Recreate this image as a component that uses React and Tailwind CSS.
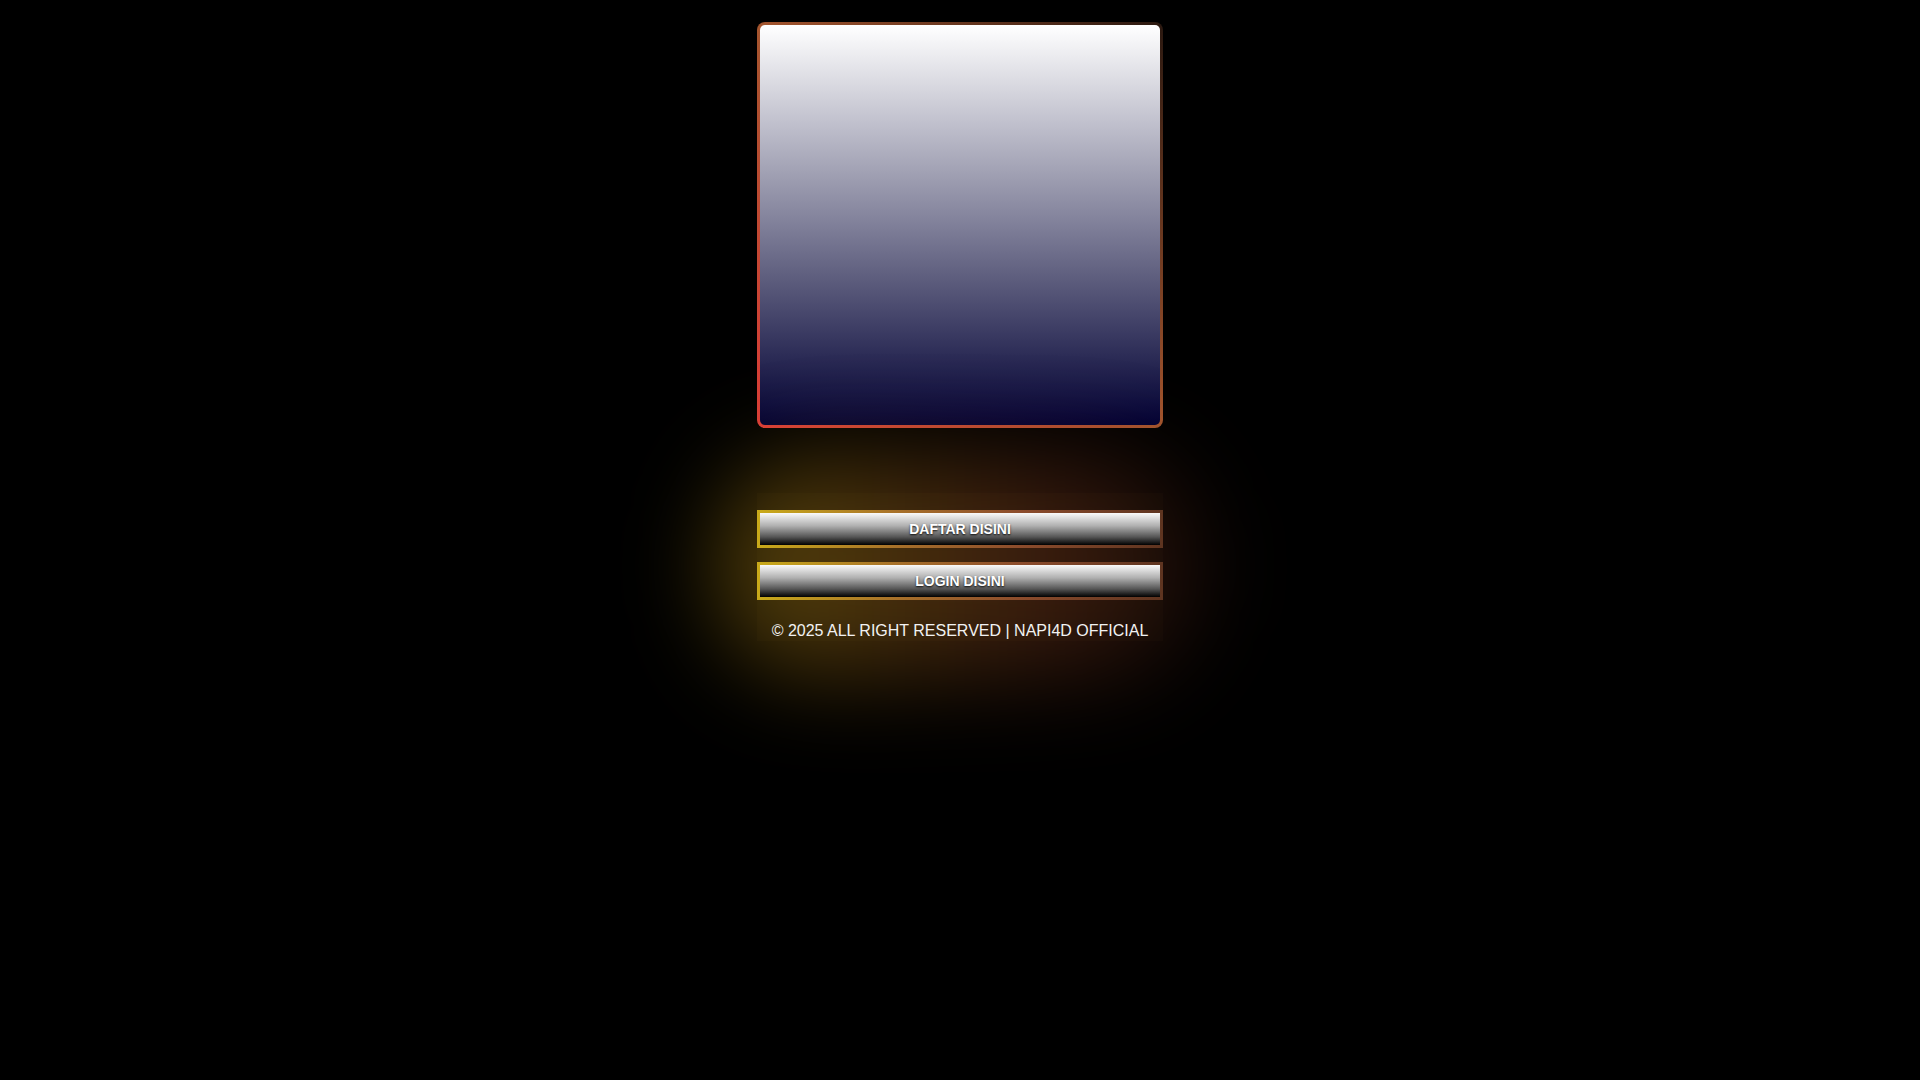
export default function App() {
  return (
    <div className="min-h-screen w-full bg-black font-['Liberation_Sans',Arial,sans-serif] flex justify-center">
      <div className="w-[406px] pt-[22px] flex flex-col">
        <div className="w-[406px] h-[406px] rounded-[8px] p-[3px] bg-[linear-gradient(45deg,#dc3c38_0%,#a4552e_50%,#2a1810_100%)]">
          <div className="w-full h-full rounded-[5px] bg-[linear-gradient(to_bottom,#ffffff_0%,#000033_100%)]" />
        </div>

        <div className="relative mt-[82px]">
          <div className="absolute -left-[40px] -right-[40px] -top-[55px] -bottom-[35px] rounded-[100px] bg-[linear-gradient(to_right,rgba(190,150,20,0.42),rgba(150,70,35,0.36)_65%,rgba(90,40,25,0.25))] blur-[45px]" />
          <div className="absolute inset-x-0 -top-[17px] bottom-0 bg-[rgba(255,200,100,0.02)]" />
          <div className="relative flex flex-col gap-[14px]">
            <button className="h-[38px] w-full p-[3px] bg-[linear-gradient(to_right,#c9aa1a_0%,#a7702a_35%,#8c4c2c_65%,#5e3420_100%)]">
              <span className="flex h-full w-full items-center justify-center bg-[linear-gradient(to_bottom,#fafafa_0%,#b0b0b0_40%,#555_75%,#000_100%)] text-white font-bold text-[14px] [text-shadow:0_1px_2px_rgba(0,0,0,0.9)]">
                DAFTAR DISINI
              </span>
            </button>
            <button className="h-[38px] w-full p-[3px] bg-[linear-gradient(to_right,#c9aa1a_0%,#a7702a_35%,#8c4c2c_65%,#5e3420_100%)]">
              <span className="flex h-full w-full items-center justify-center bg-[linear-gradient(to_bottom,#fafafa_0%,#b0b0b0_40%,#555_75%,#000_100%)] text-white font-bold text-[14px] [text-shadow:0_1px_2px_rgba(0,0,0,0.9)]">
                LOGIN DISINI
              </span>
            </button>
            <p className="mt-[7px] text-center text-[16px] leading-[20px] text-[#f2f2f2] whitespace-nowrap">
              © 2025 ALL RIGHT RESERVED | NAPI4D OFFICIAL
            </p>
          </div>
        </div>
      </div>
    </div>
  );
}
